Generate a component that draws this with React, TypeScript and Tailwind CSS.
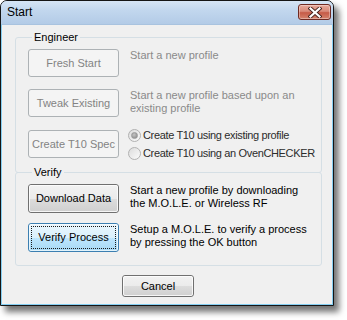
import React from 'react';

// Vista-style "Start" dialog

const font = "font-['Liberation_Sans',Arial,sans-serif]";

function WinButton({
  label,
  state = 'normal',
  className = '',
}: {
  label: string;
  state?: 'normal' | 'disabled' | 'focused';
  className?: string;
}) {
  if (state === 'disabled') {
    return (
      <div
        className={`shrink-0 flex items-center justify-center rounded-[3px] border border-[#adb2b5] bg-[#f4f4f4] text-[11px] text-[#838383] whitespace-nowrap ${className}`}
      >
        {label}
      </div>
    );
  }
  if (state === 'focused') {
    return (
      <div
        className={`shrink-0 relative rounded-[3px] border border-[#3c7fb1] bg-[linear-gradient(to_bottom,#eaf6fd_0%,#d9f0fc_50%,#bee6fd_51%,#a7d9f5_100%)] text-[11px] text-black whitespace-nowrap ${className}`}
      >
        <div className="absolute inset-0 rounded-[2px] border border-[#fbfdfe]/70" />
        <div className="absolute inset-[2px] border border-dotted border-[#1a1a1a]" />
        <div className="relative h-full flex items-center justify-center">{label}</div>
      </div>
    );
  }
  return (
    <div
      className={`shrink-0 relative rounded-[3px] border border-[#707070] bg-[linear-gradient(to_bottom,#f2f2f2_0%,#ebebeb_50%,#dddddd_51%,#cfcfcf_100%)] text-[11px] text-black whitespace-nowrap ${className}`}
    >
      <div className="absolute inset-0 rounded-[2px] border border-white/80" />
      <div className="relative h-full flex items-center justify-center">{label}</div>
    </div>
  );
}

function Radio({ checked, label }: { checked?: boolean; label: string }) {
  return (
    <div className="h-[18px] flex items-center whitespace-nowrap">
      <span className="shrink-0 w-[13px] h-[13px] rounded-full border border-[#b1b1b1] bg-[linear-gradient(135deg,#dcdcdc,#fbfbfb)] flex items-center justify-center">
        {checked && (
          <span className="w-[7px] h-[7px] rounded-full bg-[radial-gradient(circle_at_40%_35%,#c4c4c4,#858585)] border border-[#9a9a9a]" />
        )}
      </span>
      <span className="ml-[2px] text-[11px] leading-[13px] tracking-[-0.35px] text-[#2c2c2c]">{label}</span>
    </div>
  );
}

function CloseButton() {
  return (
    <div className="w-[33px] h-[16px] rounded-[3px] border border-[#6f2a22] bg-[linear-gradient(to_bottom,#e9a99b_0%,#d88a79_45%,#c65b47_55%,#d5836d_100%)] flex items-center justify-center shadow-[inset_0_0_0_1px_rgba(255,255,255,0.35)]">
      <svg width="14" height="11" viewBox="0 0 14 11">
        <path d="M2.5 1.5 L11.5 9.5 M11.5 1.5 L2.5 9.5" stroke="#4a2420" strokeWidth="4" strokeLinecap="square" />
        <path d="M2.5 1.5 L11.5 9.5 M11.5 1.5 L2.5 9.5" stroke="#ffffff" strokeWidth="2.2" strokeLinecap="square" />
      </svg>
    </div>
  );
}

export default function App() {
  return (
    <div className={`w-[347px] h-[320px] bg-white ${font}`}>
      <div className="w-[334px] h-[306px] flex flex-col rounded-t-[7px] border border-[#151515] overflow-hidden bg-[#bcd3ec] shadow-[5px_6px_6px_rgba(0,0,0,0.55)]">
        {/* title bar */}
        <div className="h-[23px] shrink-0 flex items-start justify-between bg-[linear-gradient(to_bottom,#d6e5f5_0%,#c2d7ee_40%,#b3cbe7_100%)]">
          <span className="pl-[6px] pt-[4px] text-[12px] leading-[15px] text-black">Start</span>
          <div className="mt-[3px] mr-[2px]">
            <CloseButton />
          </div>
        </div>

        {/* client area */}
        <div className="flex-1 flex flex-col border border-[#86cff2] border-t-[#a9c3df] bg-[#f0f0f0] pl-[13px] pt-[5px]">
          <fieldset className="w-[307px] rounded-[3px] border border-[#d5dfe5] pl-[12px] pb-[10px] pt-[4px]">
            <legend className="ml-[4px] px-[2px] text-[11px] leading-[15px] text-black">Engineer</legend>

            <div className="flex items-start">
              <WinButton label="Fresh Start" state="disabled" className="w-[91px] h-[28px]" />
              <div className="ml-[11px] text-[11px] leading-[13px] text-[#8a8a8a] whitespace-nowrap">Start a new profile</div>
            </div>

            <div className="flex items-start mt-[12px]">
              <WinButton label="Tweak Existing" state="disabled" className="w-[91px] h-[28px]" />
              <div className="ml-[11px] text-[11px] leading-[13px] text-[#8a8a8a] whitespace-nowrap">
                Start a new profile based upon an
                <br />
                existing profile
              </div>
            </div>

            <div className="flex items-center mt-[9px]">
              <WinButton label="Create T10 Spec" state="disabled" className="w-[91px] h-[28px]" />
              <div className="ml-[9px] flex flex-col">
                <Radio checked label="Create T10 using existing profile" />
                <Radio label="Create T10 using an OvenCHECKER" />
              </div>
            </div>
          </fieldset>

          <fieldset className="-mt-[8px] w-[307px] rounded-[3px] border border-[#d5dfe5] pl-[12px] pb-[13px] pt-[4px]">
            <legend className="ml-[4px] px-[2px] bg-[#f0f0f0] text-[11px] leading-[15px] text-black">Verify</legend>

            <div className="flex items-start">
              <WinButton label="Download Data" className="w-[91px] h-[29px]" />
              <div className="ml-[11px] text-[11px] leading-[13px] text-black whitespace-nowrap">
                Start a new profile by downloading
                <br />
                the M.O.L.E. or Wireless RF
              </div>
            </div>

            <div className="flex items-start mt-[10px]">
              <WinButton label="Verify Process" state="focused" className="w-[91px] h-[29px]" />
              <div className="ml-[11px] text-[11px] leading-[13px] text-black whitespace-nowrap">
                Setup a M.O.L.E. to verify a process
                <br />
                by pressing the OK button
              </div>
            </div>
          </fieldset>

          <div className="mt-[9px] ml-[107px]">
            <WinButton label="Cancel" className="w-[72px] h-[22px]" />
          </div>
        </div>
      </div>
    </div>
  );
}
